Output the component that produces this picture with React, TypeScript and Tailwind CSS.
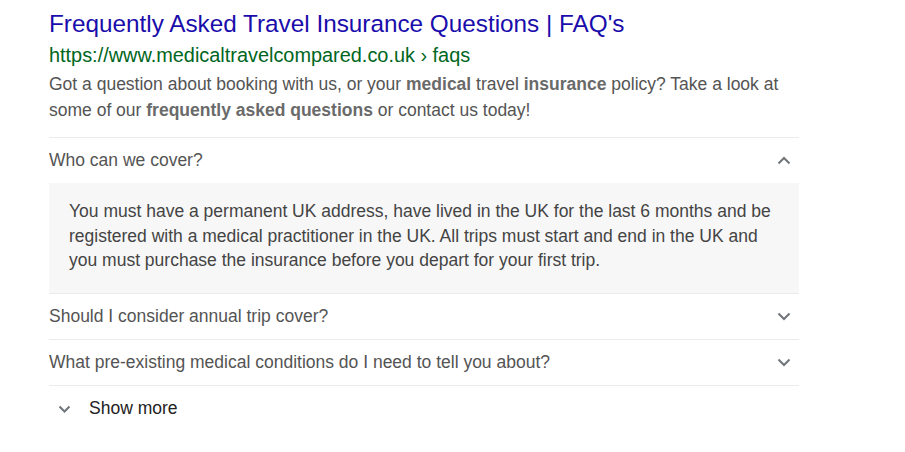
import { ReactNode } from "react";

function Chevron({ up = false }: { up?: boolean }) {
  return (
    <svg width="14" height="9" viewBox="0 0 14 9" className="shrink-0">
      <path
        d={up ? "M1.5 7.5 L7 2 L12.5 7.5" : "M1.5 1.5 L7 7 L12.5 1.5"}
        fill="none"
        stroke="#70757a"
        strokeWidth="2"
      />
    </svg>
  );
}

const faqs = [
  { q: "Should I consider annual trip cover?" },
  { q: "What pre-existing medical conditions do I need to tell you about?" },
];

function Row({ children, up }: { children: ReactNode; up?: boolean }) {
  return (
    <div className="h-[46px] border-t border-[#ebebeb] flex items-center justify-between pr-[8px] text-[17.5px] text-[#545454]">
      <span>{children}</span>
      <Chevron up={up} />
    </div>
  );
}

export default function App() {
  return (
    <div className="min-h-screen bg-white font-['Liberation_Sans',Arial,sans-serif]">
      <div className="pl-[49px] pt-[9px] w-[799px]">
        {/* Result header */}
        <a className="block text-[24.3px] leading-[30px] text-[#1a0dab] whitespace-nowrap">
          Frequently Asked Travel Insurance Questions | FAQ's
        </a>
        <div className="mt-[3px] text-[19.9px] leading-[26px] text-[#006621] whitespace-nowrap">
          https://www.medicaltravelcompared.co.uk › faqs
        </div>
        <p className="mt-[3px] text-[17.5px] leading-[26px] text-[#545454] whitespace-nowrap">
          Got a question about booking with us, or your <b className="text-[#6a6a6a]">medical</b> travel{" "}
          <b className="text-[#6a6a6a]">insurance</b> policy? Take a look at
          <br />
          some of our <b className="text-[#6a6a6a]">frequently asked questions</b> or contact us today!
        </p>

        {/* FAQ accordion */}
        <div className="mt-[14px]">
          <Row up>Who can we cover?</Row>
          <div className="h-[110px] bg-[#f7f7f7] px-[20px] pt-[16px] text-[17.5px] leading-[24.5px] text-[#444] whitespace-nowrap">
            You must have a permanent UK address, have lived in the UK for the last 6 months and be
            <br />
            registered with a medical practitioner in the UK. All trips must start and end in the UK and
            <br />
            you must purchase the insurance before you depart for your first trip.
          </div>
          {faqs.map((f) => (
            <Row key={f.q}>{f.q}</Row>
          ))}
          <div className="h-[46px] border-t border-[#ebebeb] flex items-center text-[17.5px] text-[#222]">
            <span className="ml-[9px] mr-[18px] flex">
              <svg width="13" height="8" viewBox="0 0 13 8">
                <path d="M1.5 1.5 L6.5 6.5 L11.5 1.5" fill="none" stroke="#70757a" strokeWidth="2" />
              </svg>
            </span>
            <span>Show more</span>
          </div>
        </div>
      </div>
    </div>
  );
}
